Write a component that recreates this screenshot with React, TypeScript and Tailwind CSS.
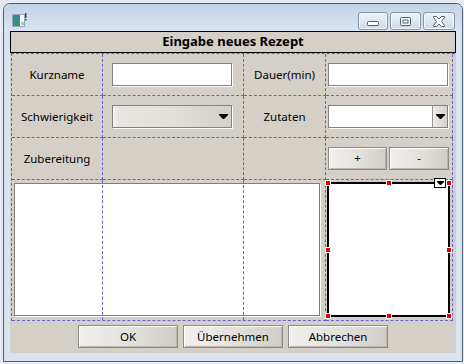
import React from 'react';

const cell = 'border-r border-b border-dashed border-[#6262d6]';

function Arrow({ className = '' }: { className?: string }) {
  return (
    <svg width="9" height="5" viewBox="0 0 9 5" className={className}>
      <polygon points="0,0 9,0 9,1 5,5 4,5 0,1" fill="#000" />
    </svg>
  );
}

function Btn({ children, className = '' }: { children: React.ReactNode; className?: string }) {
  return (
    <div
      className={`h-[23px] flex items-center justify-center border border-[#8a8a8a] bg-gradient-to-r from-[#f1f0ee] via-[#e4e2dd] to-[#d0cdc6] shadow-[inset_1px_1px_0_#fff,inset_-1px_-1px_0_#b9b6ae] text-[11.5px] text-black ${className}`}
    >
      {children}
    </div>
  );
}

function TextBox() {
  return <div className="w-[120px] h-[23px] bg-white border border-[#828282] shadow-[1px_1px_0_#fff]" />;
}

function CaptionButton({ w, children }: { w: string; children: React.ReactNode }) {
  return (
    <div
      className={`${w} h-[18px] rounded-[3px] border border-[#8596ab] bg-gradient-to-b from-[#eef3f9] to-[#cfdbe9] shadow-[inset_0_0_0_1px_#f4f8fc] flex items-center justify-center`}
    >
      {children}
    </div>
  );
}

export default function App() {
  return (
    <div className="w-[464px] h-[364px] bg-[#e9e9f6] pl-[3px] pt-[3px] font-['Noto_Sans',sans-serif]">
      <div className="w-[460px] h-[359px] border border-[#535c6a] rounded-t-[7px] bg-[#d9e4f1] flex flex-col overflow-hidden">
        {/* title bar */}
        <div className="h-[27px] shrink-0 bg-gradient-to-b from-[#c2d3e7] to-[#d8e4f2] flex items-start justify-between pl-[8px] pr-[7px] pt-[8px]">
          <svg width="15" height="14" viewBox="0 0 15 14" className="mt-px">
            <defs>
              <linearGradient id="ic" x1="0" y1="0" x2="0" y2="1">
                <stop offset="0" stopColor="#3a7fb0" />
                <stop offset="1" stopColor="#3a9a5c" />
              </linearGradient>
            </defs>
            <rect x="0.5" y="1.5" width="12" height="12" fill="#f3f6f9" stroke="#9aa7b6" />
            <rect x="1" y="2" width="7" height="11" fill="url(#ic)" />
            <rect x="9" y="9" width="3" height="3" fill="#b8c0c8" />
            <rect x="13" y="0" width="1.5" height="5" fill="#2e4a5e" />
            <rect x="13" y="6" width="1.5" height="1.5" fill="#2e4a5e" />
          </svg>
          <div className="flex gap-[2px]">
            <CaptionButton w="w-[30px]">
              <svg width="12" height="6" viewBox="0 0 12 6" className="mt-[6px]">
                <rect x="0.5" y="0.5" width="11" height="4" rx="1" fill="#fff" stroke="#4e5e72" />
              </svg>
            </CaptionButton>
            <CaptionButton w="w-[31px]">
              <svg width="11" height="9" viewBox="0 0 11 9">
                <rect x="0.5" y="0.5" width="10" height="8" rx="1" fill="#fff" stroke="#4e5e72" />
                <rect x="3" y="3" width="5" height="3" fill="none" stroke="#4e5e72" />
              </svg>
            </CaptionButton>
            <CaptionButton w="w-[32px]">
              <svg width="14" height="11" viewBox="0 0 14 11">
                <path
                  d="M1.5 0.5 H4.5 L7 3 L9.5 0.5 H12.5 V1.5 L9.5 5.5 L12.5 9.5 V10.5 H9.5 L7 8 L4.5 10.5 H1.5 V9.5 L4.5 5.5 L1.5 1.5 Z"
                  fill="#fff"
                  stroke="#4e5e72"
                  strokeLinejoin="round"
                />
              </svg>
            </CaptionButton>
          </div>
        </div>

        {/* client area */}
        <div className="mx-[6px] h-[322px] bg-[#d4d0c8] flex flex-col">
          <div className="h-[22px] border border-black flex items-center justify-center text-[13px] font-bold text-black">
            Eingabe neues Rezept
          </div>

          <div className="mx-px grid grid-cols-[91px_141px_82px_127px] grid-rows-[42px_42px_42px_141px] border-l border-t border-dashed border-[#6262d6] text-[11.5px] text-black">
            {/* row 1 */}
            <div className={`${cell} flex items-center justify-center`}>Kurzname</div>
            <div className={`${cell} flex items-center pl-[9px] pb-[1px]`}>
              <TextBox />
            </div>
            <div className={`${cell} flex items-center justify-center`}>Dauer(min)</div>
            <div className={`${cell} flex items-center pl-[2px] pb-[1px]`}>
              <TextBox />
            </div>

            {/* row 2 */}
            <div className={`${cell} flex items-center justify-center`}>Schwierigkeit</div>
            <div className={`${cell} flex items-center pl-[9px] pb-[1px]`}>
              <div className="w-[120px] h-[23px] border border-[#828282] shadow-[1px_1px_0_#fff] bg-gradient-to-r from-[#e9e7e3] via-[#e2dfda] to-[#d3d0c9] flex items-center justify-end pr-[3px]">
                <div className="w-[4px] h-full bg-gradient-to-r from-[#f7f6f4] to-transparent mr-auto" />
                <Arrow />
              </div>
            </div>
            <div className={`${cell} flex items-center justify-center`}>Zutaten</div>
            <div className={`${cell} flex items-center pl-[2px] pb-[1px]`}>
              <div className="w-[120px] h-[23px] bg-white border border-[#828282] shadow-[1px_1px_0_#fff] flex justify-end">
                <div className="w-[15px] h-full border-l border-[#9a9a9a] bg-gradient-to-r from-[#eeece9] to-[#d6d3cd] flex items-center justify-center">
                  <Arrow />
                </div>
              </div>
            </div>

            {/* row 3 */}
            <div className={`${cell} flex items-center justify-center`}>Zubereitung</div>
            <div className={cell} />
            <div className={cell} />
            <div className={`${cell} flex items-center pl-[2px] gap-[2px] pb-[1px]`}>
              <Btn className="w-[59px]">+</Btn>
              <Btn className="w-[60px]">-</Btn>
            </div>

            {/* row 4 */}
            <div className={`${cell} col-span-3 relative pl-[2px] pt-[3px]`}>
              <div className="w-[306px] h-[133px] bg-white border border-[#7f7f7f] shadow-[1px_1px_0_#fff]" />
              <div className="absolute top-0 bottom-0 left-[90px] border-l border-dashed border-[#6262d6]" />
              <div className="absolute top-0 bottom-0 left-[231px] border-l border-dashed border-[#6262d6]" />
            </div>
            <div className={`${cell} pl-px pt-[2px]`}>
              <div className="relative w-[123px] h-[135px] border-2 border-black bg-white">
                <div className="absolute -left-[4px] -top-[4px] w-[6px] h-[6px] bg-[#e00000] border border-white" />
                <div className="absolute left-1/2 -translate-x-1/2 -top-[4px] w-[6px] h-[6px] bg-[#e00000] border border-white" />
                <div className="absolute -right-[4px] -top-[4px] w-[6px] h-[6px] bg-[#e00000] border border-white" />
                <div className="absolute -left-[4px] top-1/2 -translate-y-1/2 w-[6px] h-[6px] bg-[#e00000] border border-white" />
                <div className="absolute -right-[4px] top-1/2 -translate-y-1/2 w-[6px] h-[6px] bg-[#e00000] border border-white" />
                <div className="absolute -left-[4px] -bottom-[4px] w-[6px] h-[6px] bg-[#e00000] border border-white" />
                <div className="absolute left-1/2 -translate-x-1/2 -bottom-[4px] w-[6px] h-[6px] bg-[#e00000] border border-white" />
                <div className="absolute -right-[4px] -bottom-[4px] w-[6px] h-[6px] bg-[#e00000] border border-white" />
                <div className="absolute left-[105px] -top-[6px] w-[12px] h-[10px] bg-white border border-black flex items-center justify-center">
                  <svg width="7" height="4" viewBox="0 0 7 4">
                    <polygon points="0,0 7,0 7,1 4,4 3,4 0,1" fill="#000" />
                  </svg>
                </div>
              </div>
            </div>
          </div>

          {/* bottom buttons */}
          <div className="flex-1 flex justify-center items-start pt-[4px] gap-[5px]">
            <Btn className="w-[100px]">OK</Btn>
            <Btn className="w-[100px]">Übernehmen</Btn>
            <Btn className="w-[100px]">Abbrechen</Btn>
          </div>
        </div>
      </div>
    </div>
  );
}
